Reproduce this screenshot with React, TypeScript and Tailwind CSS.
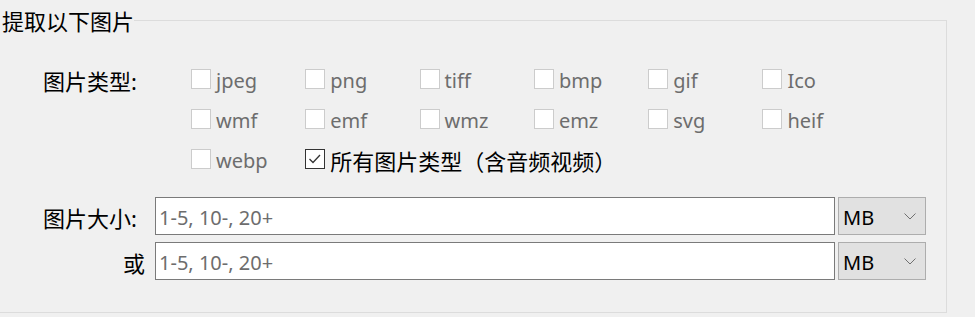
import React from "react";

const cjk = { fontFamily: '"Noto Sans", "Noto Sans CJK SC", sans-serif' };

function Box({ checked }: { checked?: boolean }) {
  return (
    <span
      className={
        "inline-flex w-[20px] h-[20px] shrink-0 items-center justify-center bg-white border " +
        (checked ? "border-[#333333]" : "border-[#cccccc]")
      }
    >
      {checked && (
        <svg width="18" height="18" viewBox="0 0 18 18" fill="none">
          <polyline points="3.5,9 7,12.5 14,5" stroke="#333333" strokeWidth="1.3" />
        </svg>
      )}
    </span>
  );
}

function Item({ label }: { label: string }) {
  return (
    <div className="flex items-center gap-[5px]">
      <Box />
      <span className="pt-[3px] text-[20px] leading-none text-[#6d6d6d]">{label}</span>
    </div>
  );
}

function SizeRow({ label, right }: { label: string; right?: boolean }) {
  return (
    <div className="flex items-center pl-[43px]">
      <div className={"w-[112px] pt-[3px] text-[22px] leading-none text-black " + (right ? "text-right pr-[10px]" : "")}>
        {label}
      </div>
      <input
        readOnly
        value="1-5, 10-, 20+"
        className="w-[680px] h-[38px] border border-[#7a7a7a] bg-white pl-[3px] pt-[2px] text-[20px] text-[#6d6d6d] outline-none"
        style={cjk}
      />
      <div className="ml-[3px] w-[88px] h-[38px] border border-[#adadad] bg-[#e1e1e1] flex items-center justify-between pl-[4px] pr-[9px]">
        <span className="pt-[3px] text-[20px] leading-none text-black">MB</span>
        <svg width="12" height="7" viewBox="0 0 12 7" fill="none">
          <polyline points="0.5,0.5 6,6 11.5,0.5" stroke="#707070" strokeWidth="1" />
        </svg>
      </div>
    </div>
  );
}

export default function App() {
  const rows = [
    ["jpeg", "png", "tiff", "bmp", "gif", "Ico"],
    ["wmf", "emf", "wmz", "emz", "svg", "heif"],
  ];
  return (
    <div className="w-[975px] h-[317px] bg-[#f0f0f0] overflow-hidden" style={cjk}>
      <fieldset className="mt-[6px] w-[947px] border border-l-0 border-[#dcdcdc] pb-[32px]">
        <legend className="pl-[2px] pt-[3px] text-[22px] leading-[25px] text-black">提取以下图片</legend>
        <div className="pt-[25px] flex">
          <div className="w-[191px] pl-[43px] pt-[3px] h-[40px] flex items-center text-[22px] leading-none text-black">
            图片类型:
          </div>
          <div className="grid grid-cols-[repeat(6,114.3px)] auto-rows-[40px] items-center">
            {rows.flat().map((l) => (
              <Item key={l} label={l} />
            ))}
            <Item label="webp" />
            <div className="col-span-5 flex items-center gap-[5px]">
              <Box checked />
              <span className="pt-[3px] text-[22px] leading-none text-black">所有图片类型（含音频视频）</span>
            </div>
          </div>
        </div>
        <div className="mt-[18px] flex flex-col gap-[7px]">
          <SizeRow label="图片大小:" />
          <SizeRow label="或" right />
        </div>
      </fieldset>
    </div>
  );
}
